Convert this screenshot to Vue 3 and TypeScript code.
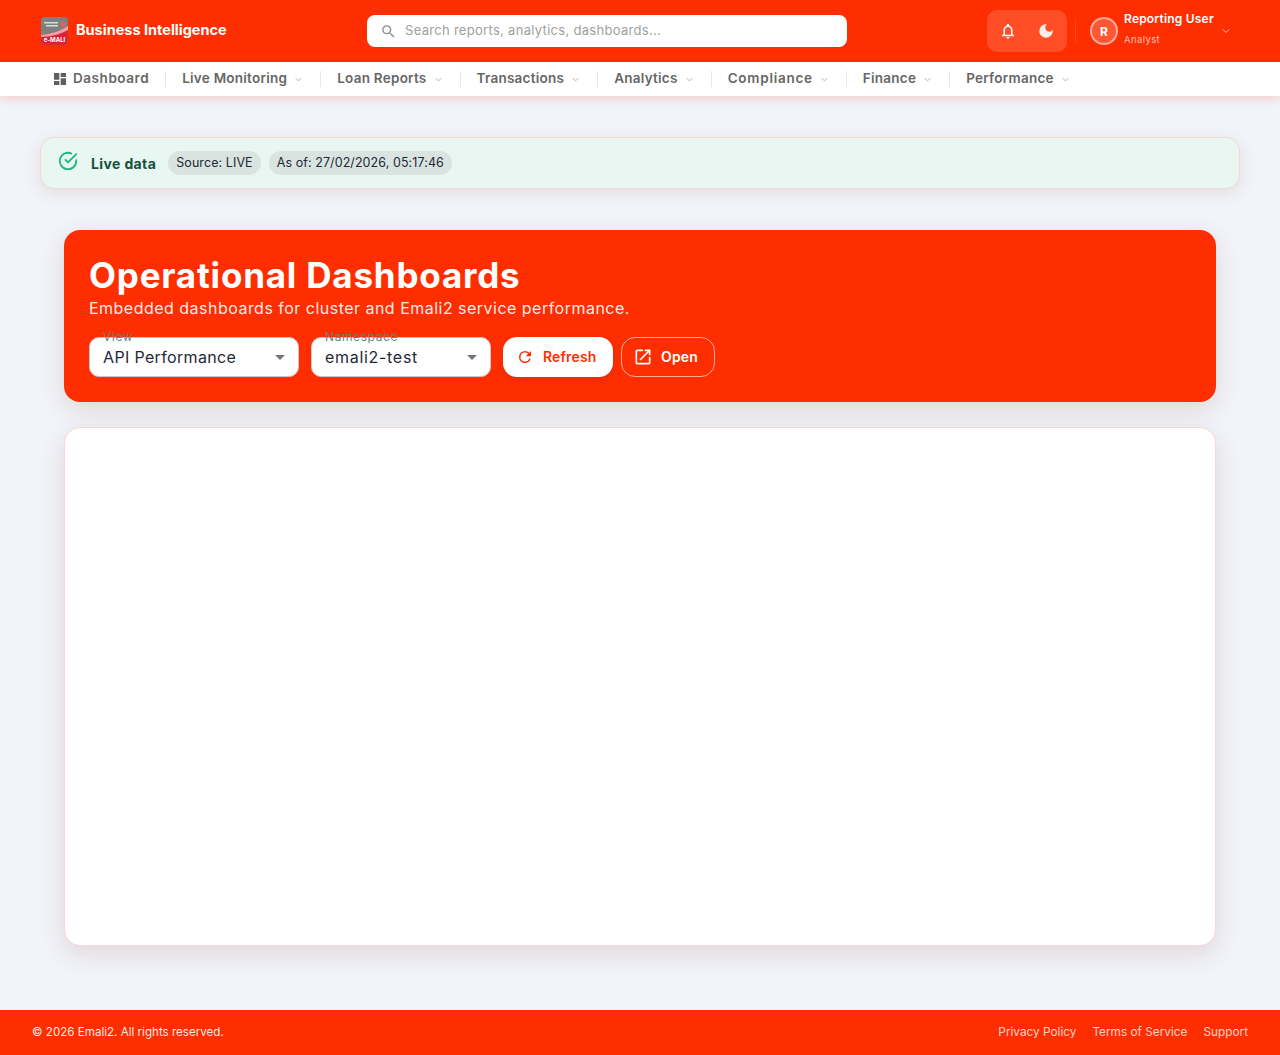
<template>
  <div class="page">
    <header class="topbar">
      <div class="brand">
        <svg class="logo" viewBox="0 0 27 28" width="27" height="28">
          <rect width="27" height="28" rx="4" fill="#7f7f7f" />
          <path d="M0 18 Q14 17 27 9 V24 a4 4 0 0 1 -4 4 H4 a4 4 0 0 1 -4 -4 Z" fill="#dd2238" />
          <path d="M0 18 Q14 17 27 9 V13 Q14 20 0 20 Z" fill="#f2a0a6" />
          <rect x="3" y="5" width="14" height="1.5" fill="#dcdcdc" />
          <rect x="5" y="8" width="12" height="1.5" fill="#dcdcdc" />
          <circle cx="22" cy="7" r="2.6" fill="#e0606a" />
          <text x="13.5" y="25" text-anchor="middle" class="logo-text">e-MALI</text>
        </svg>
        <span class="brand-name">Business Intelligence</span>
      </div>

      <div class="search">
        <svg class="search-icon" viewBox="0 0 24 24" width="17" height="17">
          <path fill="currentColor" d="M15.5 14h-.79l-.28-.27A6.47 6.47 0 0 0 16 9.5 6.5 6.5 0 1 0 9.5 16c1.61 0 3.09-.59 4.23-1.57l.27.28v.79l5 4.99L20.49 19l-4.99-5zm-6 0C7.01 14 5 11.99 5 9.5S7.01 5 9.5 5 14 7.01 14 9.5 11.99 14 9.5 14z" />
        </svg>
        <span class="search-text">Search reports, analytics, dashboards...</span>
      </div>

      <div class="top-actions">
        <div class="icon-group">
          <svg viewBox="0 0 24 24" width="18" height="18">
            <path fill="#fff" d="M12 22c1.1 0 2-.9 2-2h-4c0 1.1.9 2 2 2zm6-6v-5c0-3.07-1.63-5.64-4.5-6.32V4c0-.83-.67-1.5-1.5-1.5s-1.5.67-1.5 1.5v.68C7.64 5.36 6 7.92 6 11v5l-2 2v1h16v-1l-2-2zm-2 1H8v-6c0-2.48 1.51-4.5 4-4.5s4 2.02 4 4.5v6z" />
          </svg>
          <svg class="moon" viewBox="0 0 24 24" width="18" height="18">
            <path fill="#fff" d="M12 3a9 9 0 1 0 9 9c0-.46-.04-.92-.1-1.36a5.39 5.39 0 0 1-4.4 2.26 5.4 5.4 0 0 1-3.14-9.8C12.92 3.04 12.46 3 12 3z" />
          </svg>
        </div>
        <div class="divider" />
        <div class="user">
          <div class="avatar">R</div>
          <div class="user-info">
            <div class="user-name">Reporting User</div>
            <div class="user-role">Analyst</div>
          </div>
          <svg class="user-caret" viewBox="0 0 24 24" width="12" height="12">
            <path fill="none" stroke="currentColor" stroke-width="2" d="M6 9l6 6 6-6" />
          </svg>
        </div>
      </div>
    </header>

    <nav class="navbar">
      <div v-for="item in navItems" :key="item.label" class="nav-item">
        <svg v-if="item.icon" class="nav-icon" viewBox="0 0 24 24" width="16" height="16">
          <path fill="currentColor" d="M3 13h8V3H3v10zm0 8h8v-6H3v6zm10 0h8V11h-8v10zm0-18v6h8V3h-8z" />
        </svg>
        <span class="nav-label">{{ item.label }}</span>
        <svg v-if="!item.icon" class="nav-caret" viewBox="0 0 24 24" width="11" height="11">
          <path fill="none" stroke="currentColor" stroke-width="2" d="M6 9l6 6 6-6" />
        </svg>
      </div>
    </nav>

    <main class="content">
      <div class="live-banner">
        <svg class="live-icon" viewBox="0 0 24 24" width="22" height="22">
          <path fill="none" stroke="#1fb57f" stroke-width="2" stroke-linecap="round" stroke-linejoin="round" d="M21 11.1V12a9 9 0 1 1-5.3-8.2M21 4.5 12 13.5l-2.8-2.8" />
        </svg>
        <strong class="live-title">Live data</strong>
        <span class="chip">Source: LIVE</span>
        <span class="chip">As of: 27/02/2026, 05:17:46</span>
      </div>

      <section class="panel">
        <div class="hero">
          <h1>Operational Dashboards</h1>
          <p>Embedded dashboards for cluster and Emali2 service performance.</p>
          <div class="controls">
            <div class="select view-select">
              <label>View</label>
              <span>API Performance</span>
              <i class="arrow" />
            </div>
            <div class="select ns-select">
              <label>Namespace</label>
              <span>emali2-test</span>
              <i class="arrow" />
            </div>
            <button class="btn btn-solid" type="button">
              <svg viewBox="0 0 24 24" width="18" height="18">
                <path fill="currentColor" d="M17.65 6.35A7.96 7.96 0 0 0 12 4a8 8 0 1 0 7.73 10h-2.08A6 6 0 1 1 12 6c1.66 0 3.14.69 4.22 1.78L13 11h7V4l-2.35 2.35z" />
              </svg>
              <span>Refresh</span>
            </button>
            <button class="btn btn-outline" type="button">
              <svg viewBox="0 0 24 24" width="20" height="20">
                <path fill="currentColor" d="M19 19H5V5h7V3H5a2 2 0 0 0-2 2v14a2 2 0 0 0 2 2h14c1.1 0 2-.9 2-2v-7h-2v7zM14 3v2h3.59l-9.83 9.83 1.41 1.41L19 6.41V10h2V3h-7z" />
              </svg>
              <span>Open</span>
            </button>
          </div>
        </div>
        <div class="frame-card" />
      </section>
    </main>

    <footer class="footer">
      <span class="copyright">© 2026 Emali2. All rights reserved.</span>
      <div class="footer-links">
        <span>Privacy Policy</span>
        <span>Terms of Service</span>
        <span>Support</span>
      </div>
    </footer>
  </div>
</template>

<script setup lang="ts">
interface NavItem {
  label: string
  icon?: boolean
}

const navItems: NavItem[] = [
  { label: 'Dashboard', icon: true },
  { label: 'Live Monitoring' },
  { label: 'Loan Reports' },
  { label: 'Transactions' },
  { label: 'Analytics' },
  { label: 'Compliance' },
  { label: 'Finance' },
  { label: 'Performance' }
]
</script>

<style>
body {
  margin: 0;
  background: #f1f4f9;
}
</style>

<style scoped>
.page {
  display: flex;
  flex-direction: column;
  min-height: 1055px;
  font-family: Inter, "Noto Sans", sans-serif;
  color: #1f2937;
  background: #f1f4f9;
}

.topbar {
  display: flex;
  align-items: center;
  height: 62px;
  padding: 0 48px 0 41px;
  background: #ff2e00;
  color: #fff;
  box-sizing: border-box;
}

.brand {
  display: flex;
  align-items: center;
  gap: 8px;
  width: 326px;
}

.logo-text {
  font-family: Inter, sans-serif;
  font-size: 6px;
  font-weight: 700;
  fill: #fff;
}

.brand-name {
  padding-bottom: 3px;
  font-size: 14.5px;
  font-weight: 700;
}

.search {
  display: flex;
  align-items: center;
  gap: 8px;
  width: 480px;
  height: 32px;
  padding: 0 13px;
  background: #fff;
  border-radius: 8px;
  box-sizing: border-box;
}

.search-icon {
  color: #8f8f8f;
}

.search-text {
  padding-bottom: 2px;
  font-size: 13px;
  letter-spacing: .3px;
  color: #a0a0a0;
}

.top-actions {
  display: flex;
  align-items: center;
  margin-left: auto;
}

.icon-group {
  display: flex;
  align-items: center;
  justify-content: space-between;
  width: 80px;
  height: 42px;
  padding: 0 12px;
  background: rgba(255, 255, 255, .15);
  border-radius: 10px;
  box-sizing: border-box;
}

.moon {
  opacity: .9;
}

.divider {
  width: 1px;
  height: 24px;
  margin: 0 14px 0 8px;
  background: rgba(255, 255, 255, .12);
}

.user {
  display: flex;
  align-items: center;
  gap: 6px;
  width: 142px;
}

.avatar {
  display: flex;
  align-items: center;
  justify-content: center;
  width: 28px;
  height: 28px;
  border: 2px solid rgba(255, 255, 255, .5);
  border-radius: 50%;
  font-size: 12px;
  font-weight: 700;
  background: rgba(255, 255, 255, .2);
  box-sizing: border-box;
}

.user-info {
  padding-bottom: 6px;
}

.user-name {
  font-size: 12px;
  font-weight: 600;
  line-height: 18px;
  letter-spacing: .2px;
}

.user-role {
  margin-top: 5px;
  font-size: 9.5px;
  line-height: 14px;
  letter-spacing: .4px;
  color: rgba(255, 255, 255, .7);
}

.user-caret {
  margin: 0 0 0 auto;
  color: rgba(255, 255, 255, .8);
}

.navbar {
  display: flex;
  align-items: center;
  height: 34px;
  padding-left: 36px;
  background: #fff;
  box-shadow: 0 2px 10px rgba(255, 46, 0, .22);
}

.nav-item {
  display: flex;
  align-items: center;
  gap: 6px;
  height: 16px;
  padding: 0 16px;
  font-size: 13.5px;
  font-weight: 600;
  letter-spacing: .25px;
  color: #666;
  border-right: 1px solid #e8e8e8;
}

.nav-item:first-child {
  letter-spacing: .55px;
  gap: 5px;
}

.nav-item:nth-child(6) {
  letter-spacing: .75px;
}

.nav-item:last-child {
  border-right: 0;
}

.nav-label {
  margin-top: -2px;
}

.nav-icon {
  color: #5f5f5f;
}

.nav-caret {
  color: #aaa;
}

.content {
  flex: 1;
  padding: 41px 40px 0;
}

.live-banner {
  display: flex;
  align-items: center;
  height: 52px;
  padding: 0 16px;
  gap: 8px;
  background: #e8f7f1;
  border: 1px solid #f5d8cf;
  border-radius: 14px;
  box-shadow: 0 4px 16px rgba(140, 60, 60, .13);
  box-sizing: border-box;
}

.live-icon {
  margin-bottom: 4px;
}

.live-title {
  margin: 0 4px;
  font-size: 14px;
  font-weight: 700;
  letter-spacing: .38px;
  color: #14523c;
}

.chip {
  padding: 0 8px;
  font-size: 12.5px;
  line-height: 24px;
  letter-spacing: .08px;
  color: #1f2937;
  background: #d9e4e0;
  border-radius: 12px;
}

.panel {
  padding: 41px 24px 0;
}

.hero {
  height: 172px;
  padding: 25px 25px 0;
  background: #ff2e00;
  border-radius: 16px;
  box-shadow: 0 8px 24px rgba(140, 60, 60, .16);
  box-sizing: border-box;
}

.hero h1 {
  margin: 0;
  font-size: 35px;
  line-height: 41px;
  font-weight: 700;
  letter-spacing: .8px;
  color: #fff;
}

.hero p {
  margin: 0;
  font-size: 16px;
  line-height: 24px;
  letter-spacing: .48px;
  color: rgba(255, 255, 255, .92);
}

.controls {
  display: flex;
  align-items: center;
  gap: 12px;
  margin-top: 17px;
}

.select {
  position: relative;
  display: flex;
  align-items: center;
  height: 40px;
  padding: 0 13px;
  font-size: 16px;
  letter-spacing: .35px;
  background: #fff;
  border: 1px solid #c9c9c9;
  border-radius: 10px;
  box-sizing: border-box;
}

.view-select {
  width: 210px;
}

.ns-select {
  width: 180px;
  letter-spacing: .7px;
}

.select label {
  position: absolute;
  left: 13px;
  top: -8px;
  font-size: 12px;
  line-height: 14px;
  letter-spacing: .6px;
  color: #7a7a7a;
}

.arrow {
  position: absolute;
  right: 13px;
  top: 17px;
  border-left: 5px solid transparent;
  border-right: 5px solid transparent;
  border-top: 5px solid #757575;
}

.btn {
  display: flex;
  align-items: center;
  gap: 9px;
  height: 40px;
  font-family: inherit;
  font-size: 14px;
  font-weight: 600;
  letter-spacing: .15px;
  border-radius: 14px;
  box-sizing: border-box;
}

.btn span {
  padding-bottom: 2px;
}

.btn-solid {
  width: 110px;
  padding: 0 13px;
  color: #ff2e00;
  background: #fff;
  border: 0;
  box-shadow: 0 2px 8px rgba(60, 40, 40, .15);
}

.btn-outline {
  width: 94px;
  margin-left: -4px;
  padding: 0 11px;
  gap: 8px;
  color: #fff;
  background: transparent;
  border: 1px solid rgba(255, 255, 255, .6);
}

.frame-card {
  height: 519px;
  margin-top: 25px;
  background: #fff;
  border: 1px solid #f3d8d3;
  border-radius: 16px;
  box-shadow: 0 8px 24px rgba(140, 60, 60, .16);
  box-sizing: border-box;
}

.footer {
  display: flex;
  align-items: center;
  justify-content: space-between;
  height: 45px;
  padding: 0 32px 2px;
  font-size: 11.8px;
  color: #fff;
  background: #ff2e00;
  box-sizing: border-box;
}

.copyright {
  font-size: 11.6px;
  color: rgba(255, 255, 255, .92);
}

.footer-links {
  display: flex;
  gap: 16px;
  color: rgba(255, 255, 255, .8);
}
</style>
